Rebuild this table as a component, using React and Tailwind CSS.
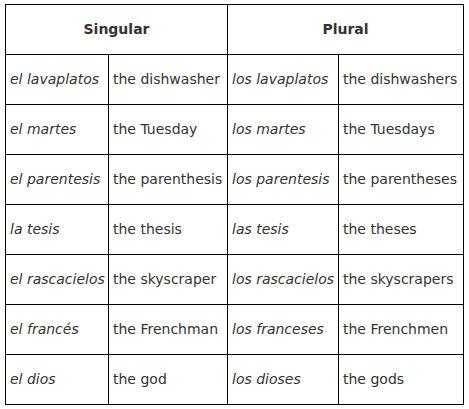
import React from "react";

const rows = [
    ["el lavaplatos", "the dishwasher", "los lavaplatos", "the dishwashers"],
    ["el martes", "the Tuesday", "los martes", "the Tuesdays"],
    ["el parentesis", "the parenthesis", "los parentesis", "the parentheses"],
    ["la tesis", "the thesis", "las tesis", "the theses"],
    ["el rascacielos", "the skyscraper", "los rascacielos", "the skyscrapers"],
    ["el francés", "the Frenchman", "los franceses", "the Frenchmen"],
    ["el dios", "the god", "los dioses", "the gods"],
];

export default function App() {
    return (
        <div className="bg-white w-[469px] h-[409px] pl-[5px] pt-[4px] font-['DejaVu_Sans',Verdana,sans-serif] text-[14px] text-[#333]">
            <table className="table-fixed border-collapse w-[458px]">
                <colgroup>
                    <col className="w-[103px]" />
                    <col className="w-[119px]" />
                    <col className="w-[111px]" />
                    <col className="w-[125px]" />
                </colgroup>
                <thead>
                    <tr className="h-[50px]">
                        <th colSpan={2} className="border border-black font-bold text-center">Singular</th>
                        <th colSpan={2} className="border border-black font-bold text-center">Plural</th>
                    </tr>
                </thead>
                <tbody>
                    {rows.map((r, i) => (
                        <tr key={i} className="h-[50px]">
                            <td className="border border-black pl-[4px] italic whitespace-nowrap overflow-hidden">{r[0]}</td>
                            <td className="border border-black pl-[4px] whitespace-nowrap overflow-hidden">{r[1]}</td>
                            <td className="border border-black pl-[4px] italic whitespace-nowrap overflow-hidden">{r[2]}</td>
                            <td className="border border-black pl-[4px] whitespace-nowrap overflow-hidden">{r[3]}</td>
                        </tr>
                    ))}
                </tbody>
            </table>
        </div>
    );
}
